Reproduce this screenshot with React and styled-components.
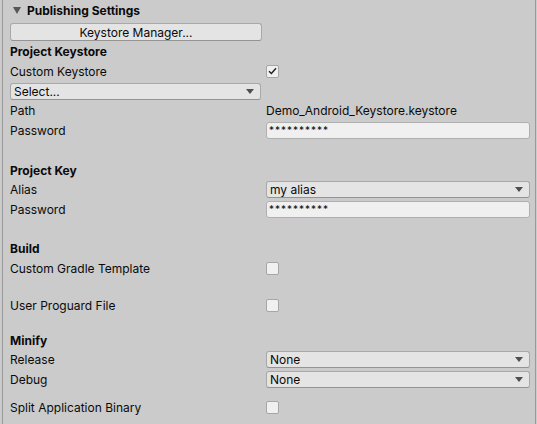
import React from "react";
import styled, { createGlobalStyle } from "styled-components";

const GlobalStyle = createGlobalStyle`
  html, body {
    margin: 0;
    padding: 0;
    background: #cbcbcb;
  }
  body {
    font-family: Inter, "Noto Sans", sans-serif;
    font-size: 12px;
    color: #0a0a0a;
  }
`;

const Frame = styled.div`
  padding: 0 1px 0 2px;
  height: 424px;
  box-sizing: border-box;
`;

const Panel = styled.div`
  height: 100%;
  box-sizing: border-box;
  border-left: 1px solid #9a9a9a;
  border-right: 1px solid #9a9a9a;
  padding: 1px 5px 0 7px;
`;

const Header = styled.div`
  display: flex;
  align-items: center;
  height: 18px;
  gap: 6px;
  padding-left: 3px;
  font-weight: 700;
  font-size: 12px;
`;

const Triangle = styled.span`
  width: 0;
  height: 0;
  border-left: 4px solid transparent;
  border-right: 4px solid transparent;
  border-top: 7px solid #575757;
`;

const Button = styled.div`
  margin-top: 4px;
  width: 252px;
  height: 18px;
  box-sizing: border-box;
  border: 1px solid #a8a8a8;
  border-bottom-color: #939393;
  border-radius: 3px;
  background: #e4e4e4;
  display: flex;
  align-items: center;
  justify-content: center;
`;

const Row = styled.div`
  display: flex;
  align-items: center;
  height: 18px;
  margin-top: ${(p) => p.$mt ?? 2}px;
`;

const Label = styled.div`
  width: 256px;
  flex-shrink: 0;
  font-weight: ${(p) => (p.$bold ? 700 : 400)};
  white-space: nowrap;
`;

const Value = styled.div`
  flex: 1;
  display: flex;
  align-items: center;
`;

const Field = styled.div`
  flex: 1;
  height: 17px;
  box-sizing: border-box;
  border: 1px solid #b0b0b0;
  border-radius: 3px;
  background: #f0f0f0;
  padding: 0 0 0 2px;
  display: flex;
  align-items: center;
  font-size: 10px;
  letter-spacing: 1px;
`;

const Dropdown = styled.div`
  flex: ${(p) => (p.$width ? "none" : 1)};
  width: ${(p) => (p.$width ? `${p.$width}px` : "auto")};
  height: 17px;
  box-sizing: border-box;
  border: 1px solid #a8a8a8;
  border-bottom-color: #939393;
  border-radius: 3px;
  background: #e4e4e4;
  padding: 0 6px 0 3px;
  display: flex;
  align-items: center;
  justify-content: space-between;
`;

const Arrow = styled.span`
  width: 0;
  height: 0;
  border-left: 4px solid transparent;
  border-right: 4px solid transparent;
  border-top: 5px solid #4f4f4f;
`;

const Checkbox = styled.div`
  width: 13px;
  height: 13px;
  box-sizing: border-box;
  border: 1px solid #a6a6a6;
  border-radius: 2px;
  background: #f0f0f0;
  display: flex;
  align-items: center;
  justify-content: center;
`;

function Check({ checked }) {
  return (
    <Checkbox>
      {checked && (
        <svg width="9" height="8" viewBox="0 0 9 8">
          <path d="M1 4.2 L3.4 6.5 L8 1.3" fill="none" stroke="#1e1e1e" strokeWidth="1.4" />
        </svg>
      )}
    </Checkbox>
  );
}

const Select = ({ value, width }) => (
  <Dropdown $width={width}>
    <span>{value}</span>
    <Arrow />
  </Dropdown>
);

export default function App() {
  return (
    <>
      <GlobalStyle />
      <Frame>
        <Panel>
          <Header>
            <Triangle />
            Publishing Settings
          </Header>
          <Button>Keystore Manager...</Button>

          <Row $mt={1}>
            <Label $bold>Project Keystore</Label>
          </Row>
          <Row>
            <Label>Custom Keystore</Label>
            <Value><Check checked /></Value>
          </Row>
          <Row>
            <Select value="Select..." width={251} />
          </Row>
          <Row $mt={1}>
            <Label>Path</Label>
            <Value>Demo_Android_Keystore.keystore</Value>
          </Row>
          <Row>
            <Label>Password</Label>
            <Value><Field>**********</Field></Value>
          </Row>

          <Row $mt={22}>
            <Label $bold>Project Key</Label>
          </Row>
          <Row $mt={1}>
            <Label>Alias</Label>
            <Value><Select value="my alias" /></Value>
          </Row>
          <Row>
            <Label>Password</Label>
            <Value><Field>**********</Field></Value>
          </Row>

          <Row $mt={21}>
            <Label $bold>Build</Label>
          </Row>
          <Row>
            <Label>Custom Gradle Template</Label>
            <Value><Check /></Value>
          </Row>
          <Row $mt={19}>
            <Label>User Proguard File</Label>
            <Value><Check /></Value>
          </Row>

          <Row $mt={17}>
            <Label $bold>Minify</Label>
          </Row>
          <Row $mt={1}>
            <Label>Release</Label>
            <Value><Select value="None" /></Value>
          </Row>
          <Row>
            <Label>Debug</Label>
            <Value><Select value="None" /></Value>
          </Row>
          <Row $mt={10}>
            <Label>Split Application Binary</Label>
            <Value><Check /></Value>
          </Row>
        </Panel>
      </Frame>
    </>
  );
}
